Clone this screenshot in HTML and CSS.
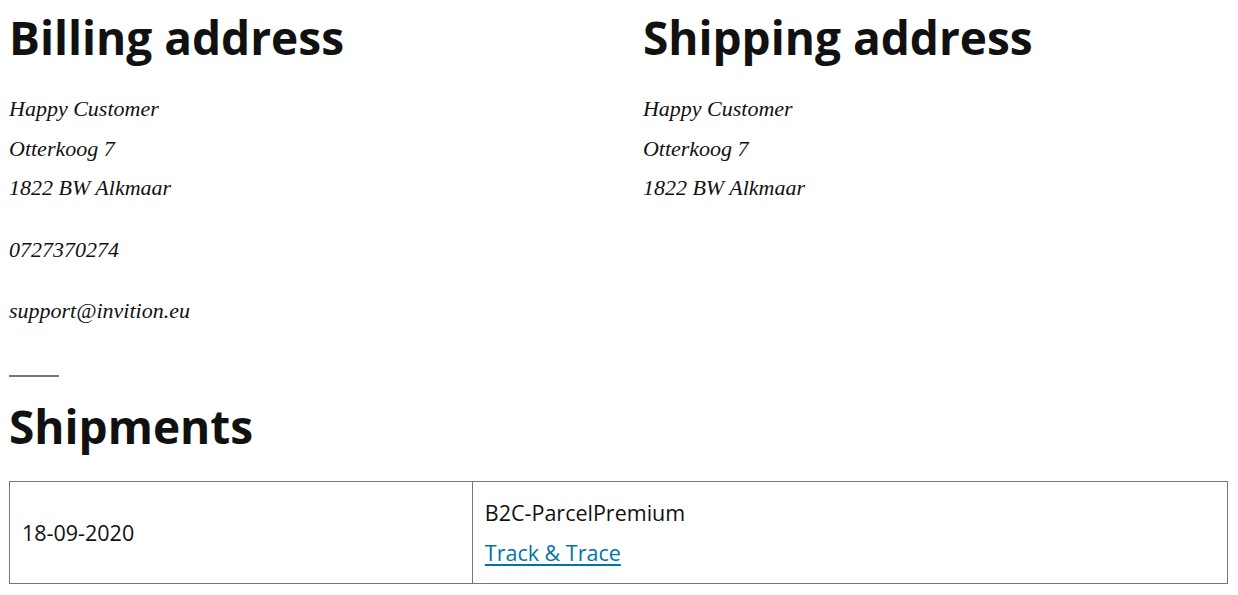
FILE: index.html
```html
<!DOCTYPE html>
<html lang="en">
<head>
    <meta charset="UTF-8">
    <title>Order details</title>
    <link rel="stylesheet" href="styles.css">
</head>
<body>
    <!-- Addresses -->
    <section class="addresses">
        <div class="address-col">
            <h2>Billing address</h2>
            <address>
                Happy Customer<br>
                Otterkoog 7<br>
                1822 BW Alkmaar
                <p class="phone">0727370274</p>
                <p class="email">support@invition.eu</p>
            </address>
        </div>
        <div class="address-col">
            <h2>Shipping address</h2>
            <address>
                Happy Customer<br>
                Otterkoog 7<br>
                1822 BW Alkmaar
            </address>
        </div>
    </section>

    <hr>

    <!-- Shipments -->
    <section class="shipments">
        <h2>Shipments</h2>
        <table>
            <tr>
                <td class="ship-date">18-09-2020</td>
                <td>
                    B2C-ParcelPremium<br>
                    <a href="#">Track &amp; Trace</a>
                </td>
            </tr>
        </table>
    </section>
</body>
</html>
```

FILE: styles.css
```css
body {
    margin: 0;
    padding: 0 10px 0 9px;
    color: #111;
    background: #fff;
    font-family: "Open Sans", sans-serif;
}

h2 {
    font-family: "Open Sans", sans-serif;
    font-weight: 700;
    font-size: 46px;
    line-height: 1.2;
    margin: 10px 0 0;
}

.addresses {
    display: flex;
    justify-content: space-between;
}

.address-col {
    width: 48%;
}

address {
    font-family: "Liberation Serif", serif;
    font-style: italic;
    font-size: 22px;
    line-height: 39.5px;
    margin-top: 24px;
}

address p {
    margin: 22px 0 0;
}

hr {
    width: 50px;
    margin: 44px 0 0;
    border: 0;
    border-top: 2px solid #777;
    text-align: left;
}

.shipments h2 {
    margin-top: 22px;
}

table {
    width: 100%;
    margin-top: 27px;
    border-collapse: collapse;
    border: 1px solid #777;
    font-size: 21.5px;
    line-height: 40px;
}

td {
    border: 1px solid #777;
    padding: 11px 12px 10px;
}

.ship-date {
    width: 38%;
}

a {
    color: #0073aa;
    text-decoration-thickness: 2px;
    text-underline-offset: 3px;
}
```
